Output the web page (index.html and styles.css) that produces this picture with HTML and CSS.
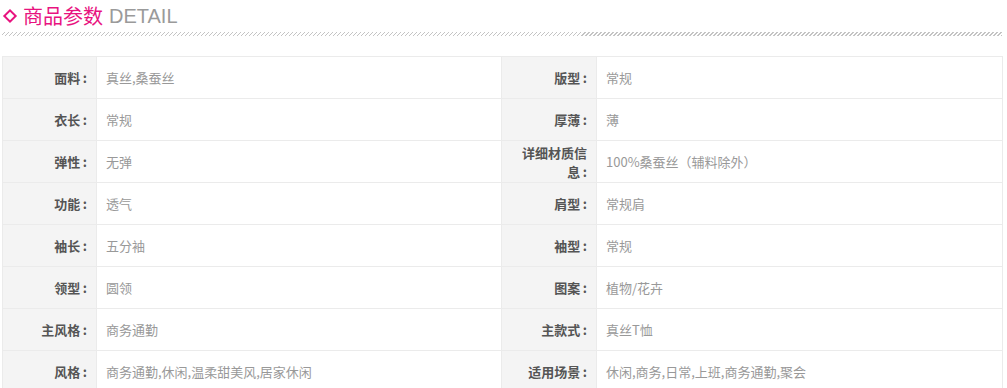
FILE: index.html
```html
<!DOCTYPE html>
<html lang="zh-CN">
<head>
<meta charset="utf-8">
<title>商品参数</title>
<link rel="stylesheet" href="styles.css">
</head>
<body>
<div class="wrap">
  <div class="head">
    <span class="diamond"></span>
    <span class="title-cn">商品参数</span>
    <span class="title-en">DETAIL</span>
  </div>
  <div class="hatch"></div>
  <table class="params">
    <colgroup>
      <col class="c-label"><col class="c-value"><col class="c-label2"><col class="c-value2">
    </colgroup>
    <tbody>
      <tr><th>面料&#8201;:</th><td>真丝,桑蚕丝</td><th>版型&#8201;:</th><td>常规</td></tr>
      <tr><th>衣长&#8201;:</th><td>常规</td><th>厚薄&#8201;:</th><td>薄</td></tr>
      <tr><th>弹性&#8201;:</th><td>无弹</td><th>详细材质信息&#8201;:</th><td>100%桑蚕丝（辅料除外）</td></tr>
      <tr><th>功能&#8201;:</th><td>透气</td><th>肩型&#8201;:</th><td>常规肩</td></tr>
      <tr><th>袖长&#8201;:</th><td>五分袖</td><th>袖型&#8201;:</th><td>常规</td></tr>
      <tr><th>领型&#8201;:</th><td>圆领</td><th>图案&#8201;:</th><td>植物/花卉</td></tr>
      <tr><th>主风格&#8201;:</th><td>商务通勤</td><th>主款式&#8201;:</th><td>真丝T恤</td></tr>
      <tr><th>风格&#8201;:</th><td>商务通勤,休闲,温柔甜美风,居家休闲</td><th>适用场景&#8201;:</th><td>休闲,商务,日常,上班,商务通勤,聚会</td></tr>
    </tbody>
  </table>
</div>
</body>
</html>
```

FILE: styles.css
```css
html, body {
  margin: 0;
  padding: 0;
  background: #fff;
}
body {
  font-family: "Noto Sans CJK SC", "Liberation Sans", sans-serif;
}
.wrap {
  width: 1000px;
  margin-left: 2px;
}
.head {
  display: flex;
  align-items: center;
  height: 30px;
  margin-top: 1px;
}
.diamond {
  width: 6px;
  height: 6px;
  border: 2.5px solid #e8137f;
  transform: rotate(45deg);
  margin-left: 3px;
  margin-right: 8px;
  flex: none;
}
.title-cn {
  color: #e8137f;
  font-size: 20px;
  line-height: 30px;
}
.title-en {
  color: #9a9a9a;
  font-family: "Liberation Sans", Arial, sans-serif;
  font-size: 20px;
  line-height: 30px;
  margin-left: 6px;
}
.hatch {
  height: 4px;
  margin-top: 1px;
  background-image: repeating-linear-gradient(135deg, transparent 0, transparent 1.6px, #c4c4c4 1.6px, #c4c4c4 2.6px, transparent 2.6px, transparent 2.83px);
}
.params {
  margin-top: 20px;
  width: 1000px;
  border-collapse: collapse;
  table-layout: fixed;
  font-size: 13px;
}
.c-label { width: 94px; }
.c-value { width: 405px; }
.c-label2 { width: 95px; }
.c-value2 { width: 406px; }
.params th, .params td {
  border: 1px solid #ebebeb;
  height: 42px;
  padding: 0 10px 0 9px;
  line-height: 19px;
  box-sizing: border-box;
}
.params th {
  background: #f4f4f4;
  color: #555;
  font-weight: bold;
  text-align: right;
  padding-right: 9px;
}
.params td {
  color: #999;
  text-align: left;
}
```
